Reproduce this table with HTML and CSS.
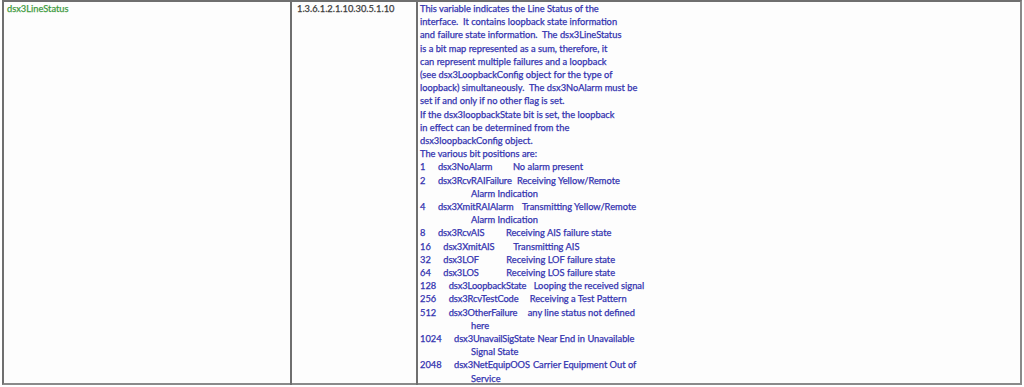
FILE: index.html
```html
<!DOCTYPE html>
<html>
<head>
<meta charset="utf-8">
<link rel="stylesheet" href="styles.css">
</head>
<body>
<div class="tbl">
  <div class="cell c-name">dsx3LineStatus</div>
  <div class="cell c-oid">1.3.6.1.2.1.10.30.5.1.10</div>
  <div class="cell c-desc">
    <div class="txt">This variable indicates the Line Status of the
interface.  It contains loopback state information
and failure state information.  The dsx3LineStatus
is a bit map represented as a sum, therefore, it
can represent multiple failures and a loopback
(see dsx3LoopbackConfig object for the type of
loopback) simultaneously.  The dsx3NoAlarm must be
set if and only if no other flag is set.
If the dsx3loopbackState bit is set, the loopback
in effect can be determined from the
dsx3loopbackConfig object.
The various bit positions are:</div>
    <div class="bit"><span class="n">1</span><span class="k t75">dsx3NoAlarm</span><span class="d">No alarm present</span></div>
    <div class="bit"><span class="n">2</span><span class="k t79">dsx3RcvRAIFailure</span><span class="d">Receiving Yellow/Remote</span></div>
    <div class="cont">Alarm Indication</div>
    <div class="bit"><span class="n">4</span><span class="k t84">dsx3XmitRAIAlarm</span><span class="d">Transmitting Yellow/Remote</span></div>
    <div class="cont">Alarm Indication</div>
    <div class="bit"><span class="n">8</span><span class="k t68">dsx3RcvAIS</span><span class="d">Receiving AIS failure state</span></div>
    <div class="bit"><span class="n">16</span><span class="k t70">dsx3XmitAIS</span><span class="d">Transmitting AIS</span></div>
    <div class="bit"><span class="n">32</span><span class="k t63">dsx3LOF</span><span class="d">Receiving LOF failure state</span></div>
    <div class="bit"><span class="n">64</span><span class="k t63">dsx3LOS</span><span class="d">Receiving LOS failure state</span></div>
    <div class="bit"><span class="n">128</span><span class="k t85">dsx3LoopbackState</span><span class="d">Looping the received signal</span></div>
    <div class="bit"><span class="n">256</span><span class="k t81">dsx3RcvTestCode</span><span class="d">Receiving a Test Pattern</span></div>
    <div class="bit"><span class="n">512</span><span class="k t79">dsx3OtherFailure</span><span class="d">any line status not defined</span></div>
    <div class="cont">here</div>
    <div class="bit"><span class="n">1024</span><span class="k t71">dsx3UnavailSigState</span><span class="d">Near End in Unavailable</span></div>
    <div class="cont">Signal State</div>
    <div class="bit"><span class="n">2048</span><span class="k t71">dsx3NetEquipOOS</span><span class="d">Carrier Equipment Out of</span></div>
    <div class="cont">Service</div>
  </div>
</div>
</body>
</html>
```

FILE: styles.css
```css
html, body {
  margin: 0;
  padding: 0;
  background: #ffffff;
}
body {
  padding: 0 0 0 2px;
  font-family: Lato, "Open Sans", sans-serif;
  font-size: 9.3px;
  line-height: 13.2px;
}
.tbl {
  width: 1020px;
  height: 385px;
  box-sizing: border-box;
  display: grid;
  grid-template-columns: 286px 126px 1fr;
  border: 2px solid #6f6f6f;
  border-right-color: #8a8a8a;
  border-bottom-color: #8a8a8a;
  background: #fdfdfd;
}
.cell {
  padding-top: 0;
  -webkit-text-stroke: 0.25px currentColor;
}
.c-name {
  color: #3d9a3d;
  padding-left: 3px;
}
.c-oid {
  color: #3c3c3c;
  padding-left: 5px;
  border-left: 2px solid #6f6f6f;
}
.c-desc {
  color: #3333b0;
  padding-left: 2px;
  border-left: 2px solid #6f6f6f;
}
.txt,
.bit {
  white-space: pre;
}
.n {
  margin-right: 12.5px;
}
.k {
  display: inline-block;
  box-sizing: border-box;
  padding-right: 3px;
  letter-spacing: -0.1px;
}
.t63 { min-width: 63px; }
.t68 { min-width: 68px; }
.t70 { min-width: 70px; }
.t71 { min-width: 71px; }
.t75 { min-width: 75px; }
.t79 { min-width: 79px; }
.t81 { min-width: 81px; }
.t84 { min-width: 84px; }
.t85 { min-width: 85px; }
.cont {
  padding-left: 51px;
}
```
